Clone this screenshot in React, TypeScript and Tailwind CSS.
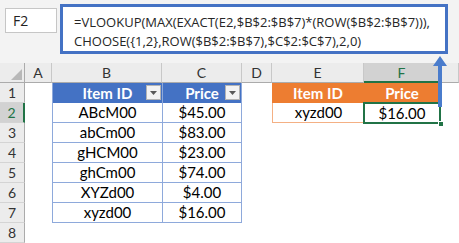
import React from 'react';

const cellFont = { fontFamily: 'Lato, "Open Sans", sans-serif' };

const rows = [
    { id: 'ABcM00', price: '$45.00' },
    { id: 'abCm00', price: '$83.00' },
    { id: 'gHCM00', price: '$23.00' },
    { id: 'ghCm00', price: '$74.00' },
    { id: 'XYZd00', price: '$4.00' },
    { id: 'xyzd00', price: '$16.00' },
];

const FilterButton = () => (
    <div className="absolute right-[1px] top-[2px] w-[15px] h-[15px] bg-[#f3f3f3] border border-[#b4b4b4] flex items-center justify-center">
        <svg width="7" height="4" viewBox="0 0 7 4">
            <path d="M0 0 L7 0 L3.5 4 Z" fill="#595959" />
        </svg>
    </div>
);

const ColHead = ({ label, selected }: { label: string; selected?: boolean }) => (
    <div
        className={
            'flex items-center justify-center text-[14px] border-r border-[#c8c8c8] ' +
            (selected
                ? 'bg-[#d2d2d2] text-[#217346] border-b-2 border-b-[#217346]'
                : 'bg-[#ececec] text-[#333] border-b border-b-[#ababab]')
        }
    >
        {label}
    </div>
);

const RowHead = ({ n, selected }: { n: number; selected?: boolean }) => (
    <div
        className={
            'flex items-center justify-center text-[14px] border-b border-[#d4d4d4] ' +
            (selected
                ? 'bg-[#d2d2d2] text-[#217346] border-r-2 border-r-[#217346]'
                : 'bg-[#ececec] text-[#333] border-r border-r-[#ababab]')
        }
    >
        {n}
    </div>
);

export default function App() {
    return (
        <div className="relative w-[459px] h-[243px] overflow-hidden bg-[#f3f3f3]" style={cellFont}>
            {/* formula bar */}
            <div className="flex h-[63px] items-start pl-[5px]" style={{ fontFamily: '"Open Sans", "Noto Sans", sans-serif' }}>
                <div className="mt-[8px] w-[52px] h-[25px] bg-white border border-[#c6c6c6] flex items-center pl-[7px] text-[14px] text-[#222]">
                    F2
                </div>
                <div className="ml-[3px] mt-[4px] w-[388px] h-[50px] bg-white border-[3px] border-[#4472c4] pl-[11px] pt-[6px] text-[13px] leading-[19px] text-[#262626] whitespace-nowrap">
                    <div>=VLOOKUP(MAX(EXACT(E2,$B$2:$B$7)*(ROW($B$2:$B$7))),</div>
                    <div>CHOOSE({'{'}1,2{'}'},ROW($B$2:$B$7),$C$2:$C$7),2,0)</div>
                </div>
            </div>

            {/* sheet grid */}
            <div className="grid grid-cols-[25px_27px_110px_80px_30px_92px_76px_1fr] auto-rows-[20px] bg-white">
                <div className="bg-[#ececec] border-r border-b border-[#ababab] flex items-end justify-end p-[2px]">
                    <svg width="11" height="11" viewBox="0 0 11 11">
                        <path d="M11 0 L11 11 L0 11 Z" fill="#b8b8b8" />
                    </svg>
                </div>
                <ColHead label="A" />
                <ColHead label="B" />
                <ColHead label="C" />
                <ColHead label="D" />
                <ColHead label="E" />
                <ColHead label="F" selected />
                <ColHead label="" />

                {/* row 1 */}
                <RowHead n={1} />
                <div />
                <div className="relative bg-[#4472c4] text-white font-bold text-[15px] flex items-center justify-center border-l border-[#8ea9db]">
                    Item ID
                    <FilterButton />
                </div>
                <div className="relative bg-[#4472c4] text-white font-bold text-[15px] flex items-center justify-center border-l border-r border-[#8ea9db]">
                    Price
                    <FilterButton />
                </div>
                <div />
                <div className="bg-[#ed7d31] text-white font-bold text-[15px] flex items-center justify-center">Item ID</div>
                <div className="bg-[#ed7d31] text-white font-bold text-[15px] flex items-center justify-center">Price</div>
                <div />

                {rows.map((r, i) => (
                    <React.Fragment key={r.id}>
                        <RowHead n={i + 2} selected={i === 0} />
                        <div />
                        <div className="text-[15px] text-black flex items-center justify-center border-l border-b border-[#8ea9db]">{r.id}</div>
                        <div className="text-[15px] text-black flex items-center justify-center border-l border-r border-b border-[#8ea9db]">{r.price}</div>
                        <div />
                        {i === 0 ? (
                            <>
                                <div className="text-[15px] text-black flex items-center justify-center border-l border-b border-[#f4b084]">xyzd00</div>
                                <div className="relative text-[15px] text-black flex items-center justify-center">
                                    $16.00
                                    <div className="absolute -left-[1px] -top-[1px] -right-[1px] -bottom-[1px] border-2 border-[#217346]" />
                                    <div className="absolute -right-[4px] -bottom-[4px] w-[6px] h-[6px] bg-[#217346] border border-white" />
                                </div>
                            </>
                        ) : (
                            <>
                                <div />
                                <div />
                            </>
                        )}
                        <div />
                    </React.Fragment>
                ))}

                <RowHead n={8} />
                <div />
                <div />
                <div />
                <div />
                <div />
                <div />
                <div />
            </div>

            {/* arrow from F2 to formula bar */}
            <svg className="absolute left-[432px] top-[56px]" width="16" height="52" viewBox="0 0 16 52">
                <path d="M8 0 L15 10 L10 10 L10 51 L6 51 L6 10 L1 10 Z" fill="#4a7ccc" />
            </svg>
        </div>
    );
}
